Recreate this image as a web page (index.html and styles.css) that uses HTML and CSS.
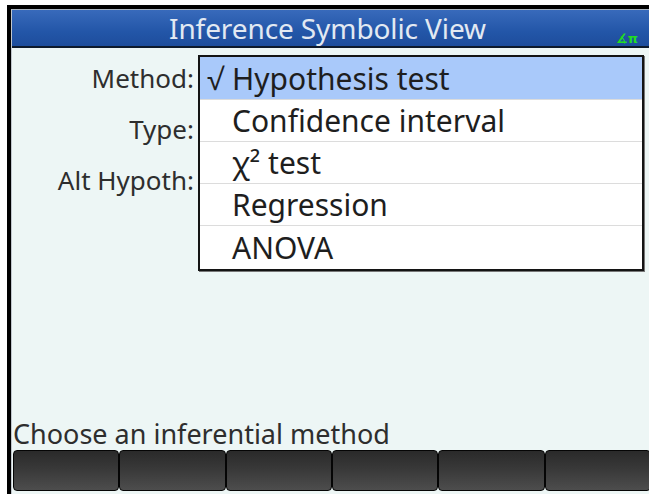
FILE: index.html
```html
<!DOCTYPE html>
<html>
<head>
<meta charset="utf-8">
<link rel="stylesheet" href="styles.css">
</head>
<body>
<div class="frame">
  <div class="screen">
    <header class="header">
      <h1 class="title">Inference Symbolic View</h1>
      <span class="angle">∡π</span>
    </header>
    <main class="main">
      <div class="form">
        <div class="label">Method:</div>
        <div class="label">Type:</div>
        <div class="label">Alt Hypoth:</div>
      </div>
      <ul class="menu">
        <li class="item selected"><span class="check">√</span>Hypothesis test</li>
        <li class="item"><span class="check"></span>Confidence interval</li>
        <li class="item"><span class="check"></span>χ² test</li>
        <li class="item"><span class="check"></span>Regression</li>
        <li class="item"><span class="check"></span>ANOVA</li>
      </ul>
    </main>
    <div class="status">Choose an inferential method</div>
    <div class="softkeys">
      <div class="key"></div>
      <div class="key"></div>
      <div class="key"></div>
      <div class="key"></div>
      <div class="key"></div>
      <div class="key"></div>
    </div>
  </div>
</div>
</body>
</html>
```
FILE: styles.css
```css
html, body {
  margin: 0;
  padding: 0;
  background: #ffffff;
  overflow: hidden;
  width: 649px;
  height: 494px;
}

.frame {
  margin: 5px 0 0 7px;
  border-top: 4px solid #000;
  border-left: 4px solid #000;
  width: 642px;
  height: 485px;
}

.screen {
  width: 640px;
  height: 485px;
  background: #edf6f5;
  border-top: 1px solid #aab4c0;
  border-left: 1px solid #c0c6cc;
  box-sizing: border-box;
  display: flex;
  flex-direction: column;
  font-family: "Noto Sans", "Open Sans", sans-serif;
  color: #2e2e2e;
}

.header {
  position: relative;
  height: 36px;
  flex: none;
  background: linear-gradient(#386abb, #2356a8 60%, #1d4d9c);
  border-bottom: 2px solid #0d1a2c;
  display: flex;
  align-items: center;
  justify-content: center;
  padding-right: 8px;
}

.title {
  margin: 0;
  font-weight: normal;
  font-size: 28px;
  line-height: 36px;
  color: #e2e9f2;
  letter-spacing: -0.1px;
}

.angle {
  position: absolute;
  right: 13px;
  bottom: 0;
  font-family: "DejaVu Sans", sans-serif;
  font-weight: bold;
  font-size: 13px;
  color: #22dd22;
}

.main {
  position: relative;
  flex: 1;
}

.form {
  display: flex;
  flex-direction: column;
  width: 182px;
  padding-top: 5px;
}

.label {
  height: 51px;
  line-height: 51px;
  text-align: right;
  font-size: 26px;
}

.menu {
  position: absolute;
  left: 186px;
  top: 7px;
  width: 446px;
  margin: 0;
  padding: 0;
  list-style: none;
  background: #ffffff;
  border: 2px solid #141414;
  box-sizing: border-box;
  box-shadow: 1px 1px 0 #777;
}

.item {
  height: 41px;
  line-height: 41px;
  font-size: 30px;
  color: #1e1e1e;
  padding-left: 7px;
  display: flex;
  align-items: center;
  border-top: 1px solid #dcdcdc;
  white-space: nowrap;
}

.item:first-child {
  border-top: none;
  height: 42px;
}

.item:last-child {
  height: 43px;
}

.item.selected {
  background: #a9c9fa;
}

.check {
  display: inline-block;
  width: 25px;
  flex: none;
}

.status {
  flex: none;
  height: 30px;
  line-height: 30px;
  font-size: 27px;
  padding-left: 1px;
  color: #2e2e2e;
  white-space: nowrap;
}

.softkeys {
  flex: none;
  display: grid;
  grid-template-columns: repeat(6, 1fr);
  height: 41px;
  margin: 1px 0 3px 1px;
}

.key {
  border: 1px solid #050505;
  border-radius: 4px;
  background: linear-gradient(#2a2a2a, #3a3a3a 50%, #4d4d4d);
}
```
